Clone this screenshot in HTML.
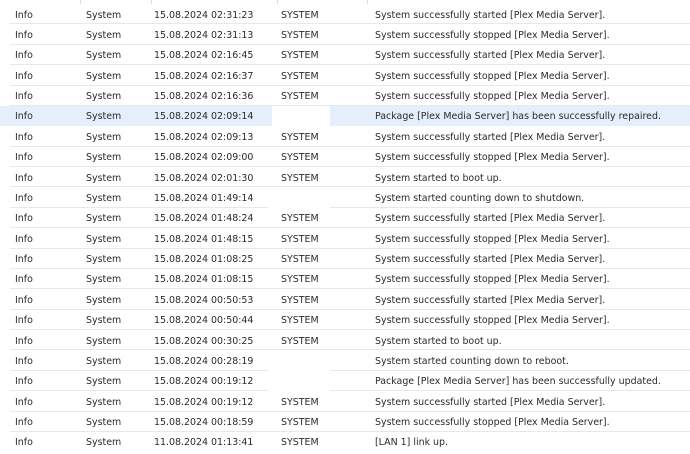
<!DOCTYPE html>
<html><head><meta charset="utf-8"><style>
body{margin:0;width:690px;height:449px;background:#fff;overflow:hidden;position:relative;font-family:"DejaVu Sans","Liberation Sans",sans-serif;font-size:9.45px;color:#2a2a2a}
.hd{position:absolute;top:0;height:4px;width:1px;background:#ddd}
.r{position:relative;height:20.38px;box-sizing:border-box}
.r span{position:absolute;top:1.5px;line-height:20.38px;white-space:nowrap}
.ln{position:absolute;left:10px;right:0;bottom:0;height:1px;background:#e8e8e8}
.gap{position:absolute;left:268px;width:62px;bottom:0;height:1px;background:#fff}
.hl{background:#e4effb}
.wb{position:absolute;left:272px;width:58px;top:0;bottom:0;background:#fff}
.a{left:15px}.b{left:86px}.c{left:154px}.d{left:281px}.e{left:375px}
#t{position:absolute;top:4px;left:0;width:690px}
</style></head><body>
<div class="hd" style="left:80px"></div><div class="hd" style="left:151px"></div><div class="hd" style="left:277px"></div><div class="hd" style="left:367px"></div>
<div id="t">
<div class="r"><span class="a">Info</span><span class="b">System</span><span class="c">15.08.2024 02:31:23</span><span class="d">SYSTEM</span><span class="e">System successfully started [Plex Media Server].</span><div class="ln"></div></div>
<div class="r"><span class="a">Info</span><span class="b">System</span><span class="c">15.08.2024 02:31:13</span><span class="d">SYSTEM</span><span class="e">System successfully stopped [Plex Media Server].</span><div class="ln"></div></div>
<div class="r"><span class="a">Info</span><span class="b">System</span><span class="c">15.08.2024 02:16:45</span><span class="d">SYSTEM</span><span class="e">System successfully started [Plex Media Server].</span><div class="ln"></div></div>
<div class="r"><span class="a">Info</span><span class="b">System</span><span class="c">15.08.2024 02:16:37</span><span class="d">SYSTEM</span><span class="e">System successfully stopped [Plex Media Server].</span><div class="ln"></div></div>
<div class="r"><span class="a">Info</span><span class="b">System</span><span class="c">15.08.2024 02:16:36</span><span class="d">SYSTEM</span><span class="e">System successfully stopped [Plex Media Server].</span><div class="ln"></div></div>
<div class="r hl"><div class="wb"></div><span class="a">Info</span><span class="b">System</span><span class="c">15.08.2024 02:09:14</span><span class="e">Package [Plex Media Server] has been successfully repaired.</span></div>
<div class="r"><span class="a">Info</span><span class="b">System</span><span class="c">15.08.2024 02:09:13</span><span class="d">SYSTEM</span><span class="e">System successfully started [Plex Media Server].</span><div class="ln"></div></div>
<div class="r"><span class="a">Info</span><span class="b">System</span><span class="c">15.08.2024 02:09:00</span><span class="d">SYSTEM</span><span class="e">System successfully stopped [Plex Media Server].</span><div class="ln"></div></div>
<div class="r"><span class="a">Info</span><span class="b">System</span><span class="c">15.08.2024 02:01:30</span><span class="d">SYSTEM</span><span class="e">System started to boot up.</span><div class="ln"></div></div>
<div class="r"><span class="a">Info</span><span class="b">System</span><span class="c">15.08.2024 01:49:14</span><span class="e">System started counting down to shutdown.</span><div class="ln"></div><div class="gap"></div></div>
<div class="r"><span class="a">Info</span><span class="b">System</span><span class="c">15.08.2024 01:48:24</span><span class="d">SYSTEM</span><span class="e">System successfully started [Plex Media Server].</span><div class="ln"></div></div>
<div class="r"><span class="a">Info</span><span class="b">System</span><span class="c">15.08.2024 01:48:15</span><span class="d">SYSTEM</span><span class="e">System successfully stopped [Plex Media Server].</span><div class="ln"></div></div>
<div class="r"><span class="a">Info</span><span class="b">System</span><span class="c">15.08.2024 01:08:25</span><span class="d">SYSTEM</span><span class="e">System successfully started [Plex Media Server].</span><div class="ln"></div></div>
<div class="r"><span class="a">Info</span><span class="b">System</span><span class="c">15.08.2024 01:08:15</span><span class="d">SYSTEM</span><span class="e">System successfully stopped [Plex Media Server].</span><div class="ln"></div></div>
<div class="r"><span class="a">Info</span><span class="b">System</span><span class="c">15.08.2024 00:50:53</span><span class="d">SYSTEM</span><span class="e">System successfully started [Plex Media Server].</span><div class="ln"></div></div>
<div class="r"><span class="a">Info</span><span class="b">System</span><span class="c">15.08.2024 00:50:44</span><span class="d">SYSTEM</span><span class="e">System successfully stopped [Plex Media Server].</span><div class="ln"></div></div>
<div class="r"><span class="a">Info</span><span class="b">System</span><span class="c">15.08.2024 00:30:25</span><span class="d">SYSTEM</span><span class="e">System started to boot up.</span><div class="ln"></div></div>
<div class="r"><span class="a">Info</span><span class="b">System</span><span class="c">15.08.2024 00:28:19</span><span class="e">System started counting down to reboot.</span><div class="ln"></div><div class="gap"></div></div>
<div class="r"><span class="a">Info</span><span class="b">System</span><span class="c">15.08.2024 00:19:12</span><span class="e">Package [Plex Media Server] has been successfully updated.</span><div class="ln"></div><div class="gap"></div></div>
<div class="r"><span class="a">Info</span><span class="b">System</span><span class="c">15.08.2024 00:19:12</span><span class="d">SYSTEM</span><span class="e">System successfully started [Plex Media Server].</span><div class="ln"></div></div>
<div class="r"><span class="a">Info</span><span class="b">System</span><span class="c">15.08.2024 00:18:59</span><span class="d">SYSTEM</span><span class="e">System successfully stopped [Plex Media Server].</span><div class="ln"></div></div>
<div class="r"><span class="a">Info</span><span class="b">System</span><span class="c">11.08.2024 01:13:41</span><span class="d">SYSTEM</span><span class="e">[LAN 1] link up.</span></div>
</div>
</body></html>
